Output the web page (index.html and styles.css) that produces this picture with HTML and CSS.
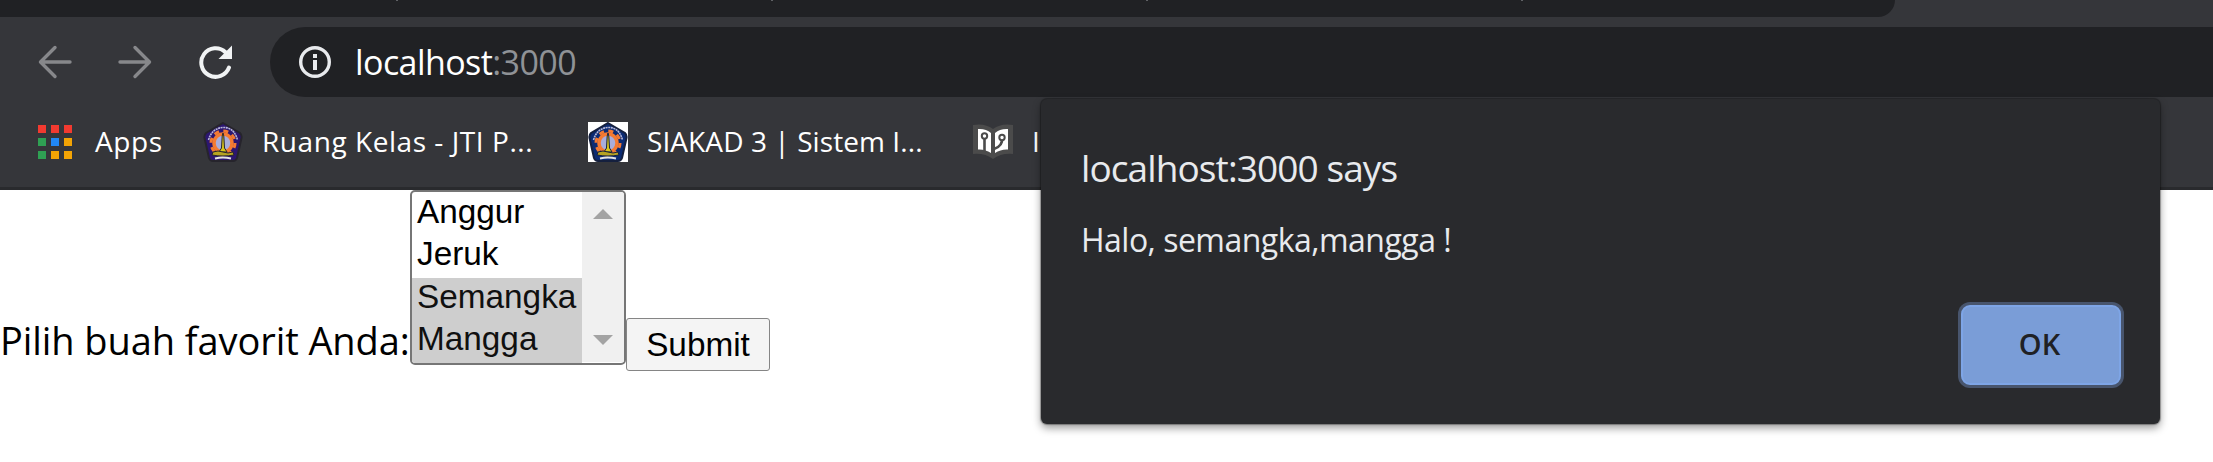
FILE: index.html
```html
<!DOCTYPE html>
<html lang="id">
<head>
<meta charset="utf-8">
<title>localhost:3000</title>
<link rel="stylesheet" href="styles.css">
</head>
<body>
<svg width="0" height="0" class="defs" aria-hidden="true">
  <symbol id="crest" viewBox="0 0 40 40">
    <path class="crest-shield" d="M20 1 37 11Q39 13 38.500 16L34 36Q33 39 30 39H10Q7 39 6 36L1.500 16Q1 13 3 11Z"/>
    <path d="M5.500 18Q9 6 20 5.500T34.500 18" fill="none" stroke="#b9b9d8" stroke-width="1.600" stroke-dasharray="2 .6"/>
    <circle cx="20" cy="21" r="12" fill="none" stroke="#f47a32" stroke-width="3" stroke-dasharray="5 4.420"/>
    <circle cx="20" cy="21" r="9" fill="#a9addb" stroke="#f47a32" stroke-width="3.500"/>
    <path d="M20 11 20.800 14 21.500 26 24 30H16L18.500 26 19.200 14Z" fill="#d9c51c"/>
    <path d="M10 30Q15 28 20 30T30 30L31 33Q26 34 20 34T9 33Z" fill="#b5a322"/>
    <path d="M12 36.500Q20 34.500 28 36.500" fill="none" stroke="#e4e4e4" stroke-width="2"/>
  </symbol>
</svg>

<header class="browser">
  <div class="tabstrip"><i></i><i></i><i></i><i></i></div>
  <div class="toolbar">
    <svg class="nav" viewBox="0 0 36 36"><path d="M33 18H4M18 3.500 3.500 18 18 32.500"/></svg>
    <svg class="nav" viewBox="0 0 36 36"><path d="M3 18H32M18 3.500 32.500 18 18 32.500"/></svg>
    <svg class="reload" viewBox="0 0 36 36"><path d="M32 23.500A14.300 14.300 0 1 1 28.500 8.200" fill="none" stroke="#f1f3f4" stroke-width="4" stroke-linecap="round"/><path d="M35 1.500V15H21.500Z" fill="#f1f3f4"/></svg>
    <div class="omnibox">
      <svg class="info" viewBox="0 0 32 32"><circle cx="16" cy="16" r="14.300" fill="none" stroke="#e8eaed" stroke-width="3.400"/><path d="M14 8h4v4h-4zM14 14h4v10h-4z" fill="#e8eaed"/></svg>
      <span class="url">localhost<span class="port">:3000</span></span>
    </div>
  </div>
  <nav class="bookmarks">
    <svg class="apps-icon" viewBox="0 0 34 34">
      <path d="M0 0h8v8H0zM13 0h8v8h-8zM26 0h8v8h-8z" fill="#f23a30"/>
      <path d="M0 13h8v8H0zM0 26h8v8H0z" fill="#2fa053"/>
      <path d="M13 13h8v8h-8z" fill="#2188f5"/>
      <path d="M26 13h8v8h-8zM13 26h8v8h-8zM26 26h8v8h-8z" fill="#f3a405"/>
    </svg>
    <span class="mark apps">Apps</span>
    <svg class="crest purple"><use href="#crest"/></svg>
    <span class="mark ruang">Ruang Kelas - JTI P...</span>
    <svg class="crest blue"><use href="#crest"/></svg>
    <span class="mark siakad">SIAKAD 3 | Sistem I...</span>
    <svg class="book" viewBox="0 0 40 36">
      <path d="M0 1Q12-1 20 5Q28-1 40 1V30Q28 29 20 35Q12 29 0 30Z" fill="#4b4b4b"/>
      <path d="M5 5Q13 4.500 18 9V29Q12 25 5 25.500ZM35 5Q27 4.500 22 9V29Q28 25 35 25.500Z" fill="#fff"/>
      <path d="M11.500 14V27M29 14Q30 22 21 25" fill="none" stroke="#4b4b4b" stroke-width="2.600"/>
      <circle cx="11.500" cy="12" r="2.700" fill="#fff" stroke="#4b4b4b" stroke-width="2"/>
      <circle cx="29" cy="13.500" r="2.700" fill="#fff" stroke="#4b4b4b" stroke-width="2"/>
    </svg>
    <span class="mark last">I</span>
  </nav>
</header>

<main class="page">
  <span class="label">Pilih buah favorit Anda:</span>
  <div class="listbox">
    <div class="options">
      <div class="option">Anggur</div>
      <div class="option">Jeruk</div>
      <div class="option selected">Semangka</div>
      <div class="option selected">Mangga</div>
    </div>
    <div class="scrollbar">
      <svg viewBox="0 0 20 10"><path d="M0 10 10 0 20 10Z" fill="#a3a3a3"/></svg>
      <svg viewBox="0 0 20 10"><path d="M0 0H20L10 10Z" fill="#a3a3a3"/></svg>
    </div>
  </div>
  <button class="submit">Submit</button>
</main>

<section class="dialog">
  <h1 class="title">localhost:3000 says</h1>
  <p class="message">Halo, semangka,mangga !</p>
  <button class="ok">OK</button>
</section>
</body>
</html>
```
FILE: styles.css
```css
* { box-sizing: border-box; }
body {
  margin: 0;
  height: 462px;
  overflow: hidden;
  background: #fff;
  font-family: "Open Sans", "Noto Sans", sans-serif;
}
svg { display: block; flex: none; }
.defs { position: absolute; }

.browser {
  height: 190px;
  background: #35363a;
  border-bottom: 3px solid #292a2d;
}
.tabstrip {
  display: flex;
  gap: 373px;
  width: 1895px;
  height: 17px;
  padding-left: 396px;
  background: #202124;
  border-bottom-right-radius: 17px;
}
.tabstrip i { width: 2px; height: 1px; background: #5f6165; }

.toolbar {
  display: flex;
  align-items: center;
  height: 70px;
  margin-top: 10px;
  padding-left: 37px;
}
.nav {
  width: 36px;
  height: 36px;
  margin-right: 44px;
  fill: none;
  stroke: #87888b;
  stroke-width: 3.4;
  stroke-linecap: round;
  stroke-linejoin: round;
}
.reload { width: 36px; height: 36px; margin-right: 37px; }
.omnibox {
  flex: 1;
  display: flex;
  align-items: center;
  height: 70px;
  padding-left: 29px;
  background: #202124;
  border-radius: 35px 0 0 35px;
}
.info { width: 32px; height: 32px; margin-right: 24px; }
.url {
  color: #fff;
  font-size: 34px;
  line-height: 46px;
  letter-spacing: -0.58px;
  white-space: nowrap;
}
.port { color: #8f9296; }

.bookmarks {
  display: flex;
  align-items: center;
  height: 90px;
  padding-left: 38px;
}
.mark {
  flex: none;
  height: 40px;
  color: #fff;
  font-size: 28px;
  line-height: 38px;
  white-space: nowrap;
}
.apps-icon { width: 34px; height: 34px; margin-right: 23px; }
.apps { width: 108px; letter-spacing: 0.6px; }
.crest { width: 40px; height: 40px; }
.crest-shield { fill: inherit; stroke: inherit; stroke-width: 2; }
.purple { fill: #2c1670; stroke: #26242c; }
.blue { fill: #0b2b73; stroke: #15203e; background: #fff; }
.ruang { width: 345px; padding-left: 19px; letter-spacing: 0.55px; }
.siakad { width: 345px; padding-left: 19px; letter-spacing: 0.08px; }
.book { width: 40px; height: 36px; }
.last { padding-left: 19px; }

.page {
  display: flex;
  align-items: flex-start;
  height: 272px;
}
.label {
  width: 410px;
  margin-top: 124px;
  color: #000;
  font-size: 38px;
  line-height: 52px;
  letter-spacing: -0.08px;
  white-space: nowrap;
}
.listbox {
  display: flex;
  width: 216px;
  height: 175px;
  border: 2px solid #767676;
  border-radius: 5px;
  overflow: hidden;
  font-family: "Liberation Sans", Arial, sans-serif;
  font-size: 33.333px;
}
.options { width: 170px; }
.option {
  height: 43px;
  padding-left: 5px;
  line-height: 37px;
  color: #000;
}
.option:first-child { line-height: 39px; }
.option:last-child { height: 42px; line-height: 35px; }
.option.selected { background: #cecece; color: #101010; }
.scrollbar {
  flex: 1;
  display: flex;
  flex-direction: column;
  justify-content: space-between;
  align-items: center;
  height: 170px;
  padding: 17px 0;
  background: #f0f0f0;
}
.scrollbar svg { width: 20px; height: 10px; }
.submit {
  width: 144px;
  height: 53px;
  margin: 128px 0 0;
  padding: 0;
  background: #f4f4f4;
  border: 1px solid #858585;
  border-radius: 3px;
  color: #000;
  font-family: "Liberation Sans", Arial, sans-serif;
  font-size: 33.333px;
  line-height: 49px;
}

.dialog {
  position: absolute;
  left: 1041px;
  top: 99px;
  display: flex;
  flex-direction: column;
  width: 1119px;
  height: 325px;
  padding: 44px 39px 39px 40px;
  background: #292a2d;
  border-radius: 6px;
  box-shadow: 0 0 1px 1px rgba(0, 0, 0, .3), 0 4px 9px rgba(0, 0, 0, .4);
  color: #e8eaed;
}
.title {
  margin: 0;
  font-size: 37px;
  font-weight: 400;
  line-height: 50px;
  letter-spacing: -0.9px;
  white-space: nowrap;
}
.message {
  margin: 25px 0 0;
  font-size: 32px;
  line-height: 44px;
  letter-spacing: -0.52px;
  white-space: nowrap;
}
.ok {
  align-self: flex-end;
  width: 160px;
  height: 80px;
  margin-top: auto;
  padding: 0 3px 3px 0;
  background: #7a9dd7;
  border: 2px solid #7ea5e6;
  border-radius: 9px;
  box-shadow: 0 0 0 3px #48556d;
  color: #202124;
  font-family: "Open Sans", "Noto Sans", sans-serif;
  font-size: 29px;
  font-weight: 600;
}
```
